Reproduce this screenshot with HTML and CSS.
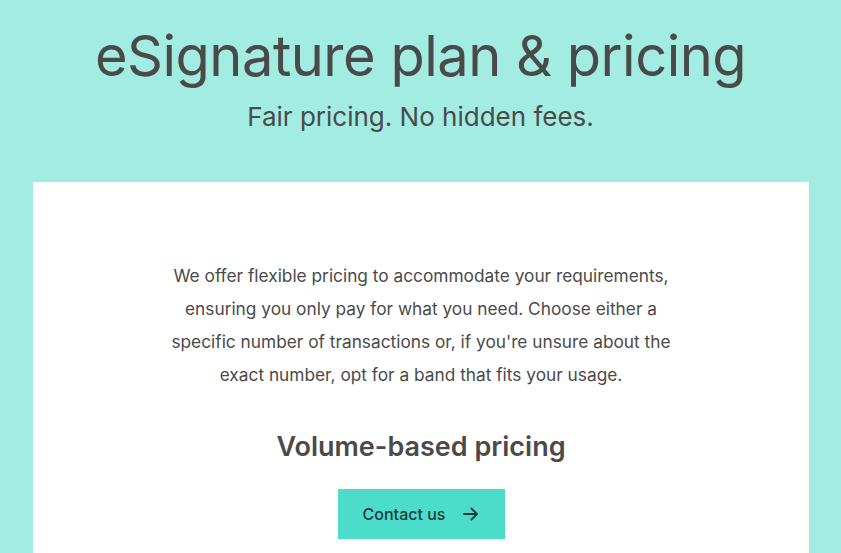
FILE: index.html
```html
<!DOCTYPE html>
<html lang="en">
<head>
<meta charset="utf-8">
<title>eSignature plan &amp; pricing</title>
<link rel="stylesheet" href="styles.css">
</head>
<body>
<header class="hero">
  <h1 class="hero-title">eSignature plan &amp; pricing</h1>
  <p class="hero-sub">Fair pricing. No hidden fees.</p>
</header>
<main class="card">
  <p class="intro">We offer flexible pricing to accommodate your requirements, ensuring you only pay for what you need. Choose either a specific number of transactions or, if you're unsure about the exact number, opt for a band that fits your usage.</p>
  <h2 class="section-title">Volume-based pricing</h2>
  <a class="btn" href="#">Contact us
    <svg class="btn-arrow" width="16" height="14" viewBox="0 0 16 14" fill="none" stroke="currentColor" stroke-width="1.8" stroke-linecap="round" stroke-linejoin="round"><path d="M1 7h13M8.5 1.5 14 7l-5.5 5.5"/></svg>
  </a>
</main>
</body>
</html>
```
FILE: styles.css
```css
* { box-sizing: border-box; }
html, body { margin: 0; padding: 0; }
body {
  background: #a3ece2;
  font-family: Inter, "Noto Sans", sans-serif;
  color: #4a4a4a;
  height: 553px;
  overflow: hidden;
}
.hero {
  display: flex;
  flex-direction: column;
  align-items: center;
  padding-top: 17px;
}
.hero-title {
  margin: 0;
  font-size: 56px;
  font-weight: 400;
  line-height: 78px;
  letter-spacing: -0.5px;
}
.hero-sub {
  margin: 4px 0 0;
  font-size: 26px;
  line-height: 36px;
  font-weight: 400;
}
.card {
  margin: 47px 32px 0 33px;
  background: #ffffff;
  display: flex;
  flex-direction: column;
  align-items: center;
  padding: 77px 0 14px;
}
.intro {
  margin: 0;
  width: 524px;
  text-align: center;
  font-size: 17.3px;
  line-height: 33px;
}
.section-title {
  margin: 38px 0 0;
  font-size: 27px;
  font-weight: 600;
  line-height: 36px;
}
.btn {
  margin-top: 24px;
  width: 167px;
  height: 50px;
  background: #4cdcca;
  color: #173a3b;
  text-decoration: none;
  font-size: 16px;
  font-weight: 500;
  display: flex;
  align-items: center;
  justify-content: center;
  gap: 18px;
}
.btn-arrow { display: block; }
```
